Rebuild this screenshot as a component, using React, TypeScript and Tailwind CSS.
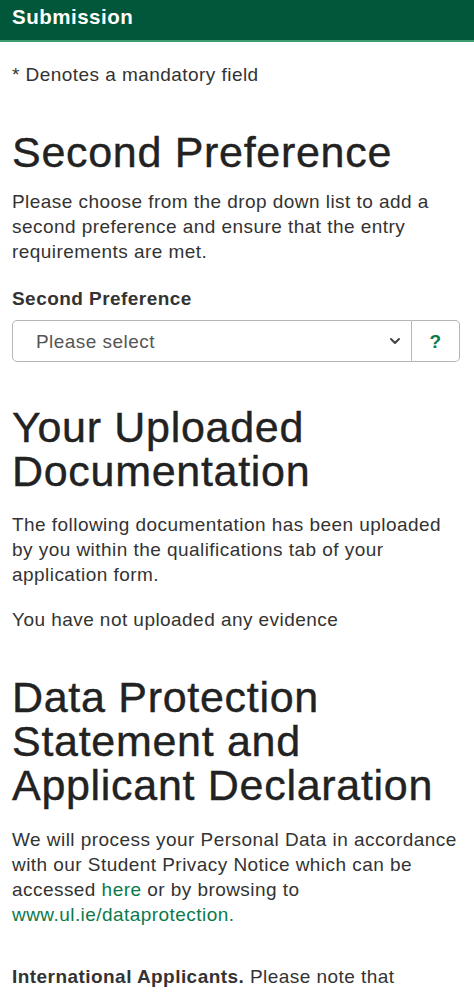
import { ChevronDown } from 'lucide-react'

export default function App() {
  return (
    <div className="min-h-screen bg-white text-[#333] font-['Liberation_Sans',Arial,sans-serif] text-[19px] leading-[25px] tracking-[0.45px]">
      <div className="h-[42px] bg-[#00573a] border-b-2 border-[#3f9b70] px-3 flex items-center">
        <span className="text-white font-bold text-[20.5px] leading-none -mt-[5px] tracking-[0.5px]">Submission</span>
      </div>

      <div className="px-3">
        <p className="mt-[20px]">* Denotes a mandatory field</p>

        <h1 className="mt-[43px] text-[43px] leading-[44px] font-normal tracking-[0.7px] text-[#222] [-webkit-text-stroke:0.4px_#222]">
          Second Preference
        </h1>
        <p className="mt-[15px]">
          Please choose from the drop down list to add a second preference and ensure that the entry requirements are met.
        </p>

        <label className="block mt-[22px] font-bold">Second Preference</label>
        <div className="mt-[9px] flex h-[42px] w-[448px]">
          <div className="flex-1 flex items-center justify-between border border-[#b5b5b5] rounded-l-[5px] pl-[23px] pr-[8px] text-[#555]">
            <span>Please select</span>
            <ChevronDown size={16} strokeWidth={3} className="text-[#444]" />
          </div>
          <div className="w-[48px] flex items-center justify-center border border-l-0 border-[#b5b5b5] rounded-r-[5px] text-[#0b7a4b] font-bold">
            ?
          </div>
        </div>

        <h1 className="mt-[43px] text-[43px] leading-[44px] font-normal tracking-[0.7px] text-[#222] [-webkit-text-stroke:0.4px_#222]">
          Your Uploaded Documentation
        </h1>
        <p className="mt-[19px]">
          The following documentation has been uploaded by you within the qualifications tab of your application form.
        </p>
        <p className="mt-[20px]">You have not uploaded any evidence</p>

        <h1 className="mt-[43px] text-[43px] leading-[44px] font-normal tracking-[0.7px] text-[#222] [-webkit-text-stroke:0.4px_#222]">
          Data Protection Statement and Applicant Declaration
        </h1>
        <p className="mt-[20px]">
          We will process your Personal Data in accordance with our Student Privacy Notice which can be accessed{' '}
          <a className="text-[#0b7a4b]">here</a> or by browsing to{' '}
          <a className="text-[#0b7a4b]">www.ul.ie/dataprotection.</a>
        </p>
        <p className="mt-[37px]">
          <span className="font-bold">International Applicants.</span> Please note that
        </p>
      </div>
    </div>
  )
}
